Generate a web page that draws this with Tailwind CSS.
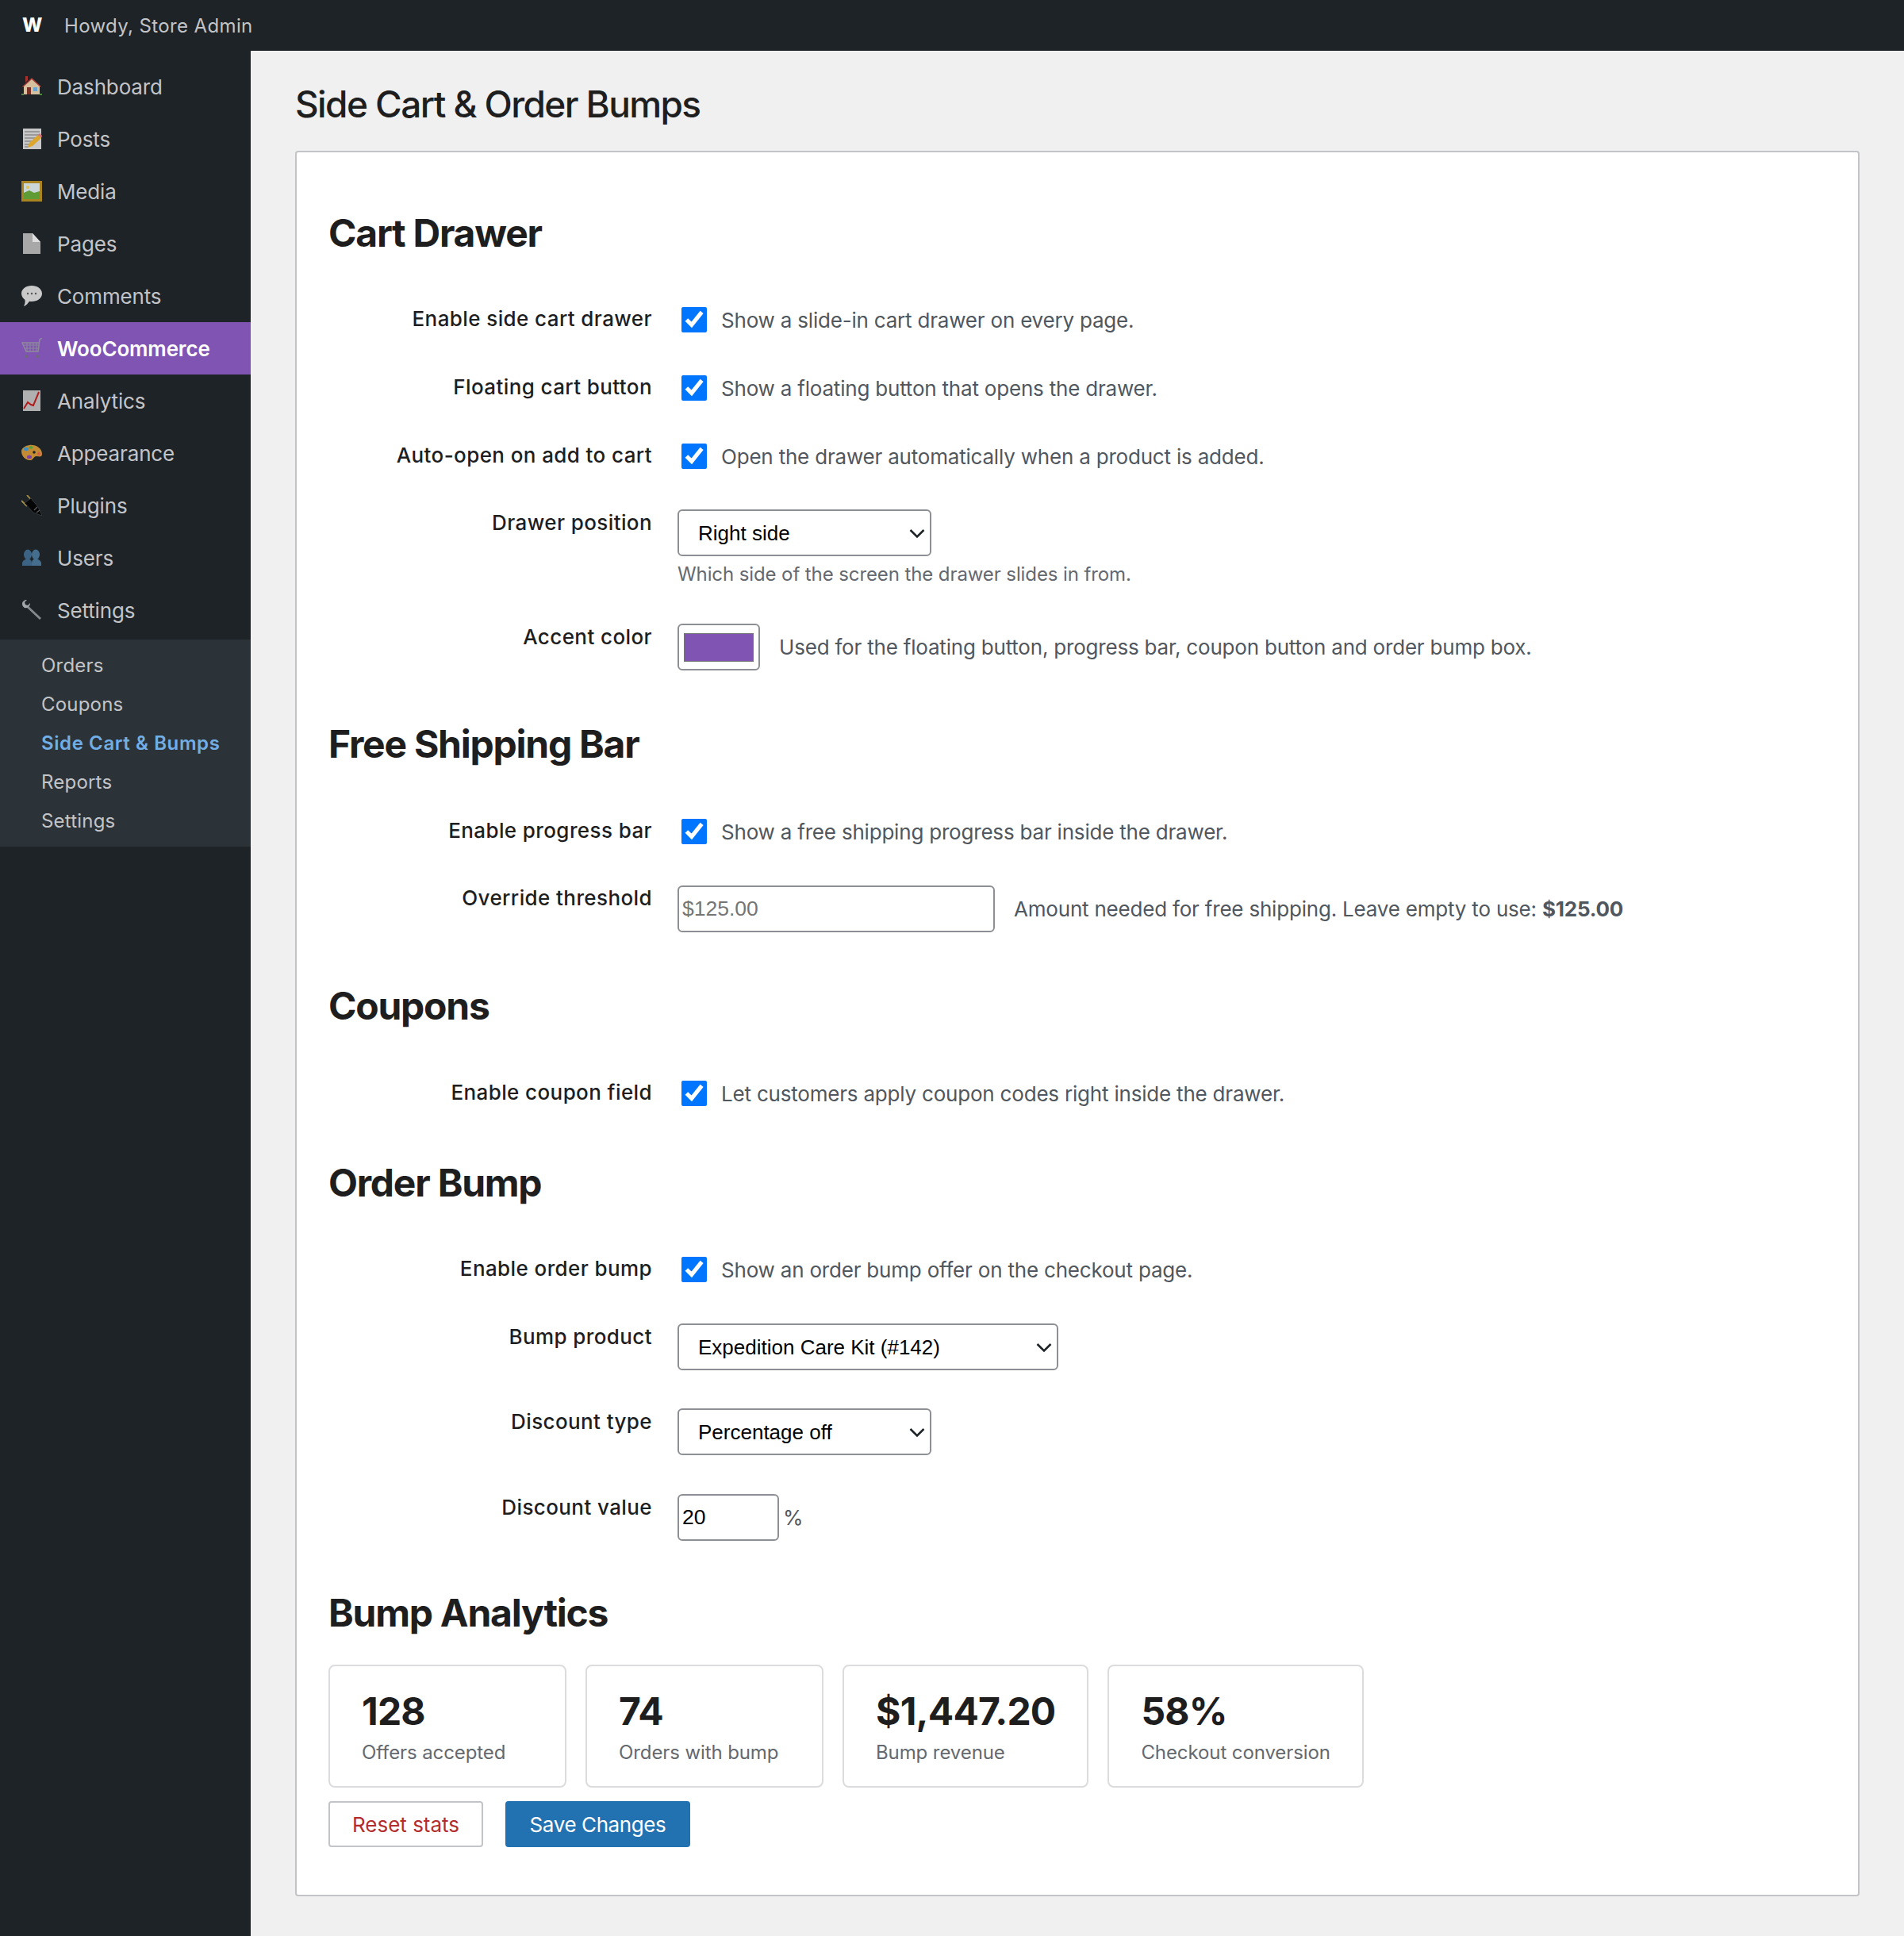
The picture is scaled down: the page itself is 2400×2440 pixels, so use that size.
<!DOCTYPE html>
<html lang="en">
<head>
<meta charset="UTF-8" />
<title>Side Cart &amp; Order Bumps</title>
<script src="https://cdn.jsdelivr.net/npm/@tailwindcss/browser@4"></script>
</head>
<body class="w-[2400px] min-h-[2440px] bg-[#f0f0f1] font-[Inter,sans-serif] text-[#1e1e1e]">
  <!-- Admin bar -->
  <header class="h-[64px] bg-[#1d2327] flex items-center text-[24px] text-[#c3c4c7]">
    <span class="w-[81px] pl-[28px] font-extrabold text-white">W</span>
    <span class="mt-[2px] tracking-[.37px]">Howdy, Store Admin</span>
  </header>

  <div class="flex min-h-[2376px]">
    <!-- Sidebar -->
    <aside class="w-[316px] shrink-0 bg-[#1d2327] pt-[12px] text-[26px] tracking-[-.15px] text-[#c3c4c7]">
      <a class="h-[66px] flex items-center">
        <span class="w-[72px] pl-[27px] shrink-0">
          <svg class="w-[26px] h-[26px]" viewBox="0 0 26 26"><path d="M5 0h3v5L5 8z" fill="#a5322c"/><path d="M3 12v11h20V12L13 3z" fill="#d6c19f"/><path d="M1 13 13 2l12 11-1 1L13 4 2 14z" fill="#a83a34"/><rect x="7" y="14" width="5" height="9" fill="#7c3326"/><rect x="15" y="14" width="5" height="5" fill="#6aa6d0"/><path d="M0 22h3v2H0zM23 22h3v2h-3z" fill="#4f8a3a"/></svg>
        </span>Dashboard
      </a>
      <a class="h-[66px] flex items-center">
        <span class="w-[72px] pl-[27px] shrink-0">
          <svg class="w-[26px] h-[26px]" viewBox="0 0 26 26"><rect x="2" y="0" width="23" height="26" fill="#c8c8c8"/><path d="M4 4h19M4 8h19M4 12h14M4 16h9M4 20h7M4 23h5" stroke="#8b8b8b" stroke-width="1.500"/><path d="M8 24l2-6L21 8l4 4-11 10z" fill="#dca52c"/><path d="M21 8l2-2 3 3-1 3z" fill="#d8707a"/></svg>
        </span>Posts
      </a>
      <a class="h-[66px] flex items-center">
        <span class="w-[72px] pl-[27px] shrink-0">
          <svg class="w-[26px] h-[26px]" viewBox="0 0 26 26"><rect width="26" height="26" fill="#a98420"/><rect x="3" y="3" width="20" height="20" fill="#cbd6d8"/><path d="M3 15l7-3 6 3 7-2v10H3z" fill="#5f9c35"/><circle cx="8" cy="8" r="2" fill="#e5c44c"/></svg>
        </span>Media
      </a>
      <a class="h-[66px] flex items-center">
        <span class="w-[72px] pl-[27px] shrink-0">
          <svg class="w-[26px] h-[26px]" viewBox="0 0 26 26"><path d="M2 0h12l10 11v15H2z" fill="#a8a8a8"/><path d="M14 0l10 11H14z" fill="#dedede"/></svg>
        </span>Pages
      </a>
      <a class="h-[66px] flex items-center">
        <span class="w-[72px] pl-[27px] shrink-0">
          <svg class="w-[26px] h-[26px]" viewBox="0 0 26 26"><path d="M13 0c7 0 13 4 13 10s-6 10-13 10c-1 0-2 0-3-.300C8.500 22 6 25 3 26c1-2 2-5 1.500-8C2 16 0 13 0 10 0 4 6 0 13 0z" fill="#c9c9c9"/><circle cx="8" cy="10" r="1.200" fill="#555"/><circle cx="13" cy="10" r="1.200" fill="#555"/><circle cx="18" cy="10" r="1.200" fill="#555"/></svg>
        </span>Comments
      </a>
      <a class="h-[66px] flex items-center bg-[#7f54b3] text-white font-semibold">
        <span class="w-[72px] pl-[27px] shrink-0">
          <svg class="w-[26px] h-[26px]" viewBox="0 0 26 26" fill="none"><path d="M26 0l-3 2-2 15H6L1 6h22" stroke="#8e8a9a" stroke-width="1.500"/><path d="M3 9h19M4 13h17M7 6v11M11 6v11M15 6v11M19 6v11" stroke="#8e8a9a"/><circle cx="6" cy="23" r="2" fill="#6f6a78"/><circle cx="20" cy="23" r="2" fill="#6f6a78"/></svg>
        </span>WooCommerce
      </a>
      <a class="h-[66px] flex items-center">
        <span class="w-[72px] pl-[27px] shrink-0">
          <svg class="w-[26px] h-[26px]" viewBox="0 0 26 26" fill="none"><rect x="2" y="0" width="22" height="26" fill="#b0b0b0"/><path d="M3 23l5-8 4 3 3 1 7-17" stroke="#b01c1c" stroke-width="2"/></svg>
        </span>Analytics
      </a>
      <a class="h-[66px] flex items-center">
        <span class="w-[72px] pl-[27px] shrink-0">
          <svg class="w-[26px] h-[26px]" viewBox="0 0 26 26"><path d="M10 3c8-1 16 4 16 11 0 5-4 3-7 3-4 0-4 6-9 5C3 21 0 15 0 11c0-4 4-7 10-8z" fill="#c38c34"/><ellipse cx="6" cy="8" rx="3" ry="2.200" fill="#3b8fc9"/><ellipse cx="12" cy="6" rx="2.500" ry="1.800" fill="#4fa33c"/><ellipse cx="10" cy="18" rx="3" ry="2.200" fill="#7d3fa8"/><ellipse cx="22" cy="14" rx="2" ry="2.500" fill="#d5604a"/><circle cx="16" cy="12" r="1.800" fill="#1d2327"/></svg>
        </span>Appearance
      </a>
      <a class="h-[66px] flex items-center">
        <span class="w-[72px] pl-[27px] shrink-0">
          <svg class="w-[26px] h-[26px]" viewBox="0 0 26 26" fill="none"><path d="M7 0l7 8M0 7l7 7" stroke="#a89048" stroke-width="1.800"/><path d="M4 10l8-6 9 11 5 11-11-4z" fill="#050505" stroke="#3a3f44" stroke-width=".8"/><path d="M20 15l-4 4M23 19l-4 3" stroke="#5a5f64" stroke-width="1.200"/></svg>
        </span>Plugins
      </a>
      <a class="h-[66px] flex items-center">
        <span class="w-[72px] pl-[27px] shrink-0">
          <svg class="w-[26px] h-[26px]" viewBox="0 0 26 26"><ellipse cx="8" cy="9" rx="5" ry="6.500" fill="#3c6384"/><ellipse cx="18" cy="9" rx="5" ry="6.500" fill="#456d8e"/><path d="M1 23v-3c0-3 3-5 7-6 4 1 5 3 5 6v3z" fill="#3c6384"/><path d="M13 23v-3c0-3 1-5 5-6 4 1 7 3 7 6v3z" fill="#456d8e"/></svg>
        </span>Users
      </a>
      <a class="h-[66px] flex items-center">
        <span class="w-[72px] pl-[27px] shrink-0">
          <svg class="w-[26px] h-[26px]" viewBox="0 0 26 26" fill="none"><path d="M7 8l17 16" stroke="#85898e" stroke-width="3"/><path d="M1 5c0-3 3-5 6-5L4 3l1 3 3 1 3-3c0 4-3 7-7 6C2 9 1 7 1 5z" fill="#a3a8ad"/></svg>
        </span>Settings
      </a>

      <div class="mt-[4px] bg-[#2c3338] py-[8px] text-[24px] tracking-[.2px]">
        <a class="h-[49px] flex items-center pl-[52px]">Orders</a>
        <a class="h-[49px] flex items-center pl-[52px]">Coupons</a>
        <a class="h-[49px] flex items-center pl-[52px] text-[#72aee6] font-semibold tracking-[.6px]">Side Cart &amp; Bumps</a>
        <a class="h-[49px] flex items-center pl-[52px]">Reports</a>
        <a class="h-[49px] flex items-center pl-[52px]">Settings</a>
      </div>
    </aside>

    <!-- Main -->
    <main class="flex-1 pl-[56px] pr-[56px]">
      <h1 class="h-[126px] pt-[9px] flex items-center text-[46px] font-medium tracking-[-1.6px]">Side Cart &amp; Order Bumps</h1>

      <form class="bg-white border-2 border-[#c3c4c7] rounded-[4px] px-[40px] pt-[35px] h-[2200px] text-[26px] tracking-[-.2px]">
        <h2 class="h-[133px] flex items-center text-[48px] font-bold tracking-[-1.25px]">Cart Drawer</h2>

        <div class="h-[86px] flex items-center">
          <label class="w-[408px] text-right font-medium tracking-[.4px] mb-[3px]">Enable side cart drawer</label>
          <input type="checkbox" checked class="ml-[37px] w-[32px] h-[32px] accent-[#0075ff]" />
          <span class="ml-[18px] text-[#50575e]">Show a slide-in cart drawer on every page.</span>
        </div>
        <div class="h-[86px] flex items-center">
          <label class="w-[408px] text-right font-medium tracking-[.4px] mb-[3px]">Floating cart button</label>
          <input type="checkbox" checked class="ml-[37px] w-[32px] h-[32px] accent-[#0075ff]" />
          <span class="ml-[18px] text-[#50575e]">Show a floating button that opens the drawer.</span>
        </div>
        <div class="h-[86px] flex items-center">
          <label class="w-[408px] text-right font-medium tracking-[.4px] mb-[3px]">Auto-open on add to cart</label>
          <input type="checkbox" checked class="ml-[37px] w-[32px] h-[32px] accent-[#0075ff]" />
          <span class="ml-[18px] text-[#50575e]">Open the drawer automatically when a product is added.</span>
        </div>
        <div class="h-[143px] flex pt-[24px]">
          <label class="w-[408px] text-right font-medium tracking-[.4px] mt-[-3px]">Drawer position</label>
          <div class="ml-[32px]">
            <div class="relative w-[320px]">
              <select class="appearance-none w-full h-[59px] bg-white border-2 border-[#8c8f94] rounded-[6px] pl-[24px] pt-[2px] text-black tracking-normal font-['Liberation_Sans',sans-serif]">
                <option>Right side</option>
              </select>
              <svg class="absolute right-[8px] top-[22px] w-[20px] h-[16px]" viewBox="0 0 20 16" fill="none"><path d="M1.500 4l8.500 8.500 8.500-8.500" stroke="#1d2327" stroke-width="2.500"/></svg>
            </div>
            <p class="mt-[5px] text-[24px] tracking-[-.1px] text-[#646970]">Which side of the screen the drawer slides in from.</p>
          </div>
        </div>
        <div class="h-[110px] flex pt-[25px]">
          <label class="w-[408px] text-right font-medium tracking-[.4px] mt-[-3px]">Accent color</label>
          <span class="ml-[32px] w-[104px] h-[59px] bg-white border-2 border-[#8c8f94] rounded-[6px] p-[6px] shrink-0 flex items-center">
            <span class="block w-full h-[36px] bg-[#7f54b3] border border-[#767676]"></span>
          </span>
          <span class="ml-[24px] h-[59px] flex items-center text-[#50575e]">Used for the floating button, progress bar, coupon button and order bump box.</span>
        </div>

        <h2 class="h-[134px] flex items-center text-[48px] font-bold tracking-[-1.25px]">Free Shipping Bar</h2>

        <div class="h-[86px] flex items-center">
          <label class="w-[408px] text-right font-medium tracking-[.4px] mb-[3px]">Enable progress bar</label>
          <input type="checkbox" checked class="ml-[37px] w-[32px] h-[32px] accent-[#0075ff]" />
          <span class="ml-[18px] text-[#50575e]">Show a free shipping progress bar inside the drawer.</span>
        </div>
        <div class="h-[110px] flex pt-[25px]">
          <label class="w-[408px] text-right font-medium tracking-[.4px] mt-[-4px]">Override threshold</label>
          <input type="text" placeholder="$125.00" class="ml-[32px] w-[400px] h-[59px] bg-white border-2 border-[#8c8f94] rounded-[6px] px-[4px] text-[26.500px] tracking-normal placeholder-[#757575] font-['Liberation_Sans',sans-serif]" />
          <span class="ml-[24px] h-[59px] flex items-center text-[#50575e]">Amount needed for free shipping. Leave empty to use:&nbsp;<strong class="font-bold">$125.00</strong></span>
        </div>

        <h2 class="h-[134px] flex items-center text-[48px] font-bold tracking-[-1.25px]">Coupons</h2>

        <div class="h-[86px] flex items-center">
          <label class="w-[408px] text-right font-medium tracking-[.4px] mb-[3px]">Enable coupon field</label>
          <input type="checkbox" checked class="ml-[37px] w-[32px] h-[32px] accent-[#0075ff]" />
          <span class="ml-[18px] text-[#50575e]">Let customers apply coupon codes right inside the drawer.</span>
        </div>

        <h2 class="h-[136px] pt-[3px] flex items-center text-[48px] font-bold tracking-[-1.25px]">Order Bump</h2>

        <div class="h-[86px] flex items-center">
          <label class="w-[408px] text-right font-medium tracking-[.4px] mb-[3px]">Enable order bump</label>
          <input type="checkbox" checked class="ml-[37px] w-[32px] h-[32px] accent-[#0075ff]" />
          <span class="ml-[18px] text-[#50575e]">Show an order bump offer on the checkout page.</span>
        </div>
        <div class="h-[107px] flex pt-[25px]">
          <label class="w-[408px] text-right font-medium tracking-[.4px] mt-[-3px]">Bump product</label>
          <div class="relative ml-[32px] w-[480px]">
            <select class="appearance-none w-full h-[59px] bg-white border-2 border-[#8c8f94] rounded-[6px] pl-[24px] pt-[2px] text-black tracking-normal font-['Liberation_Sans',sans-serif]">
              <option>Expedition Care Kit (#142)</option>
            </select>
            <svg class="absolute right-[8px] top-[22px] w-[20px] h-[16px]" viewBox="0 0 20 16" fill="none"><path d="M1.500 4l8.500 8.500 8.500-8.500" stroke="#1d2327" stroke-width="2.500"/></svg>
          </div>
        </div>
        <div class="h-[108px] flex pt-[25px]">
          <label class="w-[408px] text-right font-medium tracking-[.4px] mt-[-3px]">Discount type</label>
          <div class="relative ml-[32px] w-[320px]">
            <select class="appearance-none w-full h-[59px] bg-white border-2 border-[#8c8f94] rounded-[6px] pl-[24px] pt-[2px] text-black tracking-normal font-['Liberation_Sans',sans-serif]">
              <option>Percentage off</option>
            </select>
            <svg class="absolute right-[8px] top-[22px] w-[20px] h-[16px]" viewBox="0 0 20 16" fill="none"><path d="M1.500 4l8.500 8.500 8.500-8.500" stroke="#1d2327" stroke-width="2.500"/></svg>
          </div>
        </div>
        <div class="h-[109px] flex pt-[25px]">
          <label class="w-[408px] text-right font-medium tracking-[.4px] mt-[-3px]">Discount value</label>
          <input type="text" value="20" class="ml-[32px] w-[128px] h-[59px] bg-white border-2 border-[#8c8f94] rounded-[6px] px-[4px] text-black text-[26.500px] tracking-normal font-['Liberation_Sans',sans-serif]" />
          <span class="ml-[5px] h-[59px] flex items-center text-[#50575e]">%</span>
        </div>

        <h2 class="h-[131px] flex items-center text-[48px] font-bold tracking-[-1.25px]">Bump Analytics</h2>

        <div class="flex gap-[24px] tracking-[-.1px]">
          <div class="h-[155px] pl-[40px] pr-[24px] pt-[27px] bg-white border-2 border-[#dcdcde] rounded-[8px] w-[300px]">
            <p class="text-[48px] leading-[60px] font-bold tracking-[-.8px]">128</p>
            <p class="mt-[4px] text-[24px] text-[#646970]">Offers accepted</p>
          </div>
          <div class="h-[155px] pl-[40px] pr-[24px] pt-[27px] bg-white border-2 border-[#dcdcde] rounded-[8px] w-[300px]">
            <p class="text-[48px] leading-[60px] font-bold tracking-[-.8px]">74</p>
            <p class="mt-[4px] text-[24px] text-[#646970]">Orders with bump</p>
          </div>
          <div class="h-[155px] px-[40px] pt-[27px] bg-white border-2 border-[#dcdcde] rounded-[8px]">
            <p class="text-[48px] leading-[60px] font-bold tracking-[-.8px]">$1,447.20</p>
            <p class="mt-[4px] text-[24px] text-[#646970]">Bump revenue</p>
          </div>
          <div class="h-[155px] px-[40px] pt-[27px] bg-white border-2 border-[#dcdcde] rounded-[8px]">
            <p class="text-[48px] leading-[60px] font-bold tracking-[-.8px]">58%</p>
            <p class="mt-[4px] text-[24px] text-[#646970]">Checkout conversion</p>
          </div>
        </div>

        <div class="mt-[17px] flex gap-[28px]">
          <button type="button" class="w-[195px] h-[58px] bg-white border-2 border-[#c3c4c7] rounded-[4px] text-[#b32d2e] tracking-normal">Reset stats</button>
          <button type="button" class="w-[233px] h-[58px] bg-[#2271b1] rounded-[4px] text-white tracking-[-.4px]">Save Changes</button>
        </div>
      </form>
    </main>
  </div>
</body>
</html>
